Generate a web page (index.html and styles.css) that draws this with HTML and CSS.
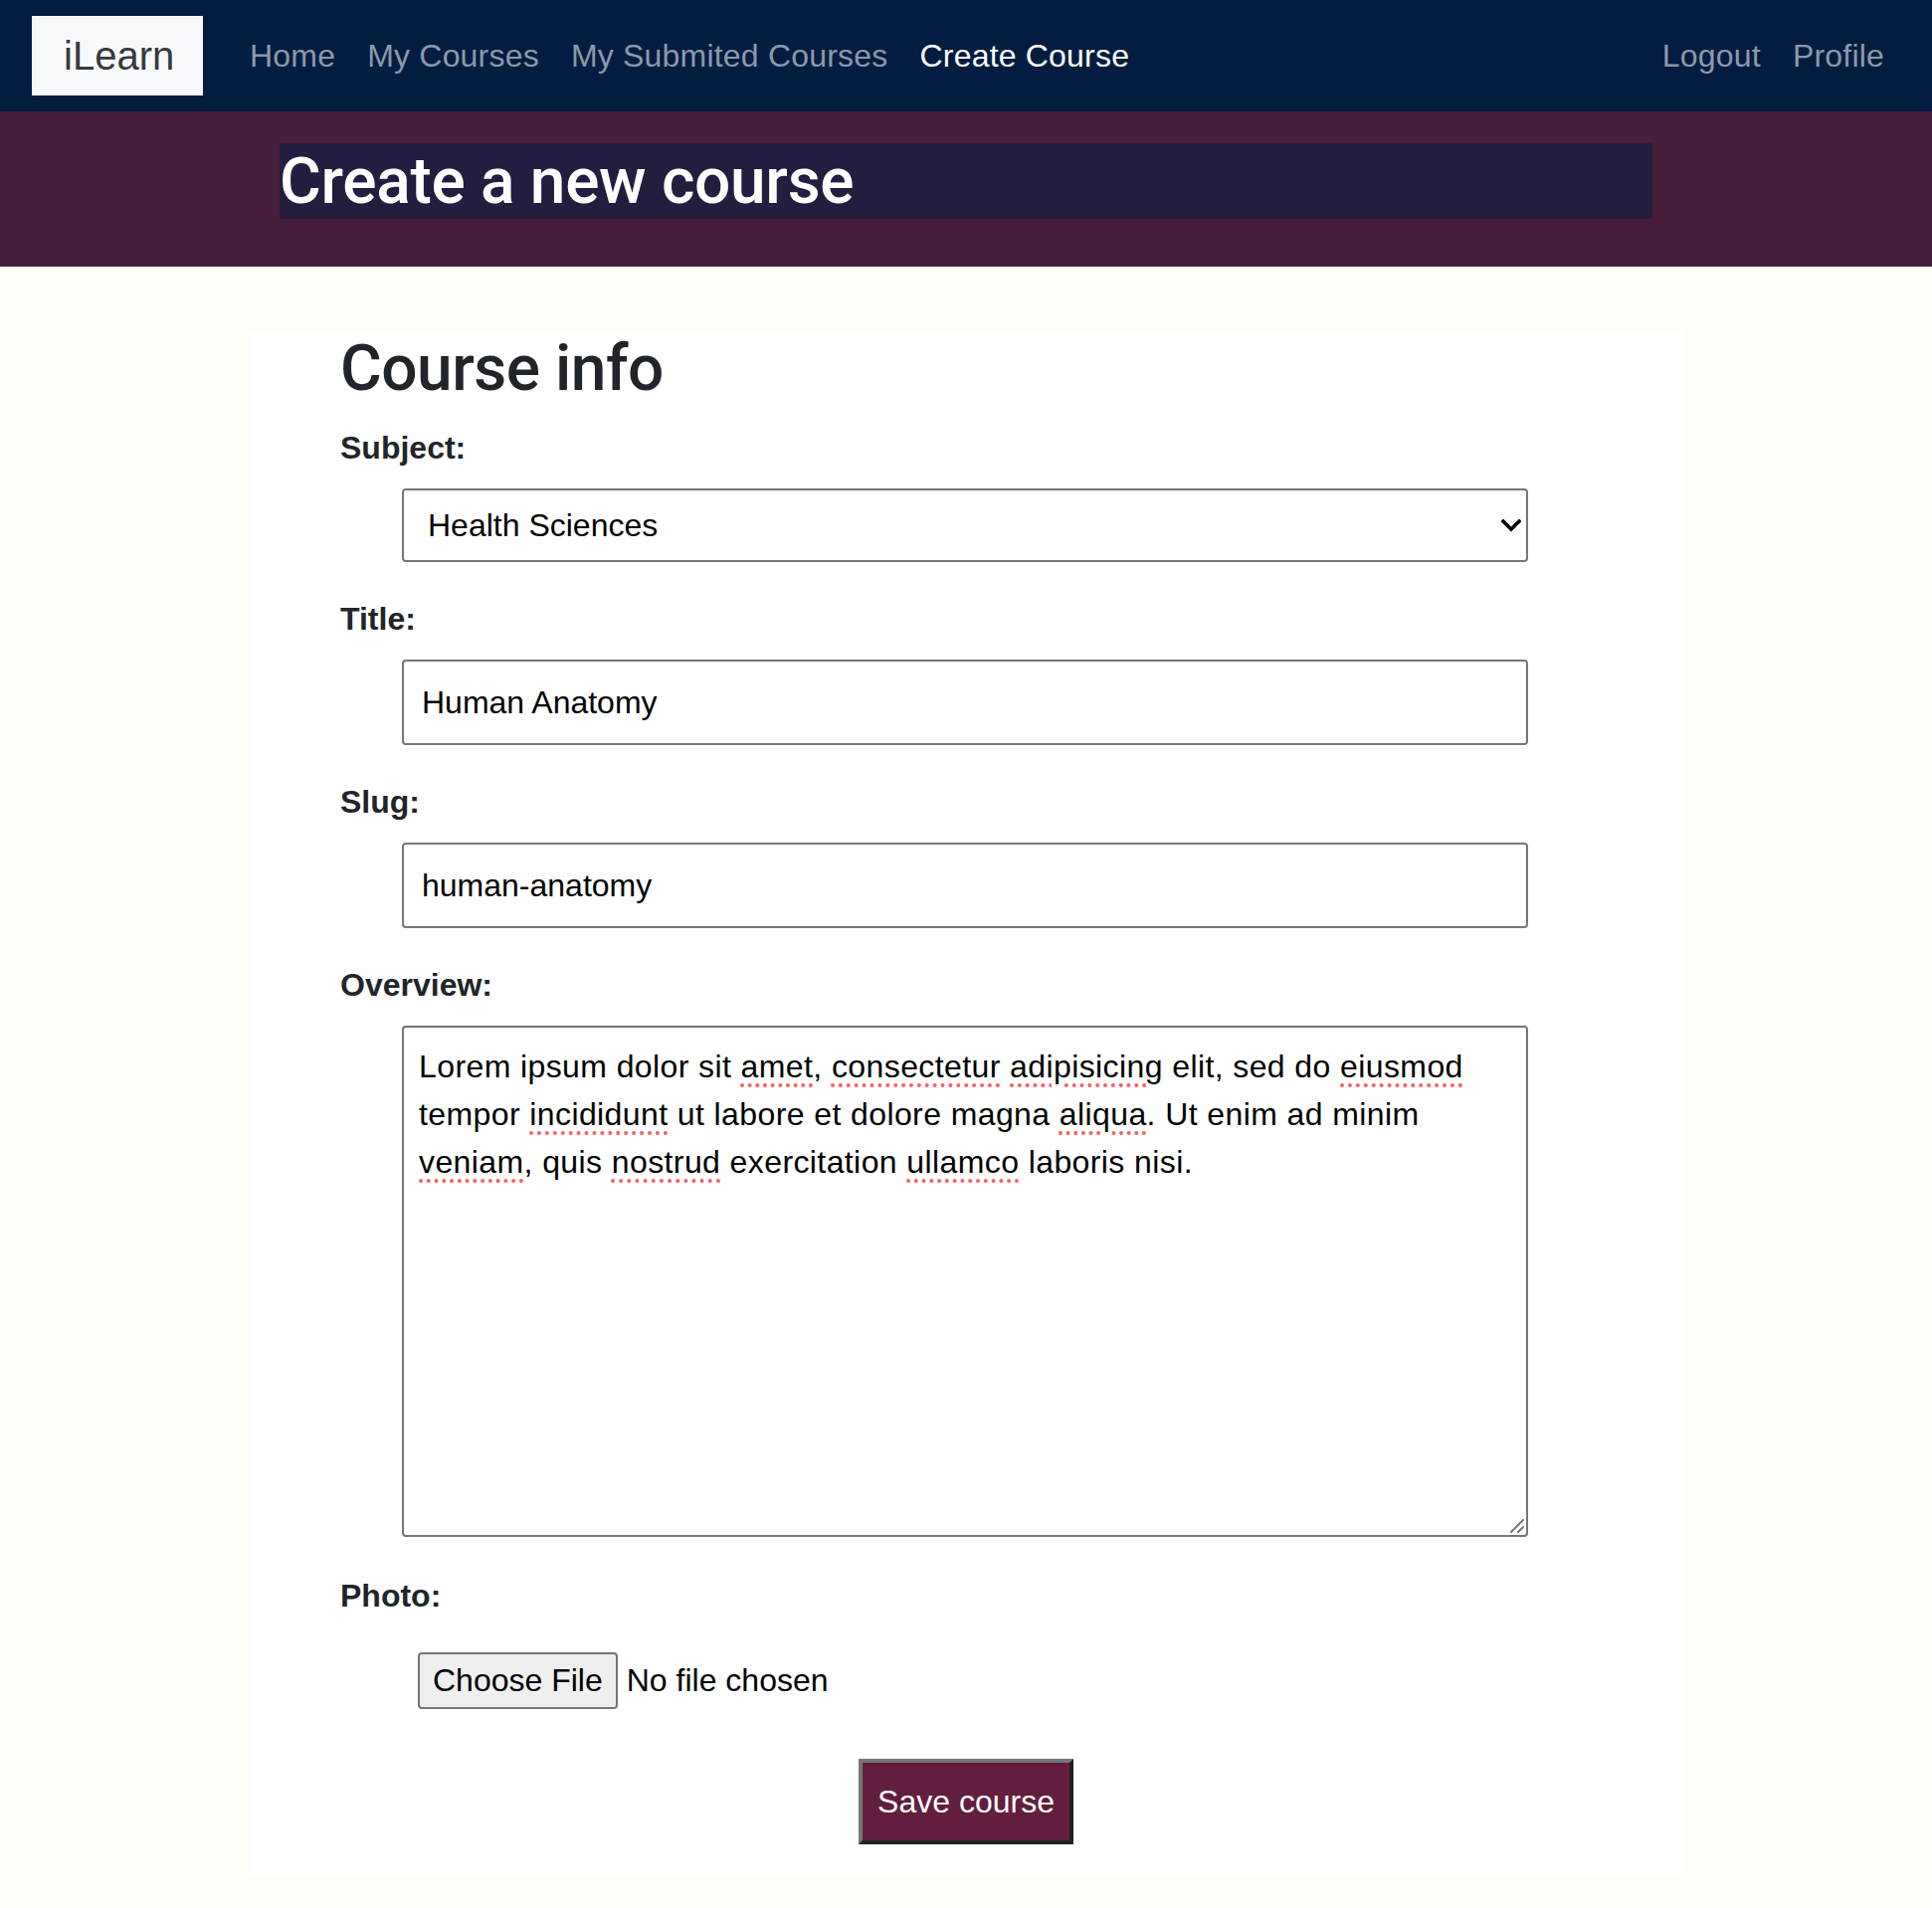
FILE: index.html
```html
<!DOCTYPE html>
<html lang="en">
<head>
<meta charset="utf-8">
<title>iLearn - Create a new course</title>
<link rel="stylesheet" href="styles.css">
</head>
<body>
<nav class="navbar">
  <a class="brand" href="#">iLearn</a>
  <ul class="nav-left">
    <li><a class="nav-link" href="#">Home</a></li>
    <li><a class="nav-link" href="#">My Courses</a></li>
    <li><a class="nav-link" href="#">My Submited Courses</a></li>
    <li><a class="nav-link active" href="#">Create Course</a></li>
  </ul>
  <ul class="nav-right">
    <li><a class="nav-link" href="#">Logout</a></li>
    <li><a class="nav-link" href="#">Profile</a></li>
  </ul>
</nav>

<header class="band">
  <h1 class="band-title">Create a new course</h1>
</header>

<main class="card">
  <h2 class="card-title">Course info</h2>
  <form class="form">
    <label class="field-label" for="subject">Subject:</label>
    <div class="control select-wrap">
      <select id="subject" class="select">
        <option>Health Sciences</option>
      </select>
      <svg class="chevron" width="20" height="14" viewBox="0 0 20 14"><path d="M2 3 L10 11 L18 3" fill="none" stroke="#000" stroke-width="3.6" stroke-linecap="square"/></svg>
    </div>

    <label class="field-label" for="title">Title:</label>
    <input id="title" class="control input" type="text" value="Human Anatomy">

    <label class="field-label" for="slug">Slug:</label>
    <input id="slug" class="control input" type="text" value="human-anatomy">

    <label class="field-label" for="overview">Overview:</label>
    <div class="control textarea-wrap">
      <div id="overview" class="textarea" contenteditable="true" spellcheck="false">Lorem ipsum dolor sit <span class="sp">amet</span>, <span class="sp">consectetur</span> <span class="sp">adipisicing</span> elit, sed do <span class="sp">eiusmod</span> tempor <span class="sp">incididunt</span> ut labore et dolore magna <span class="sp">aliqua</span>. Ut enim ad minim <span class="sp">veniam</span>, quis <span class="sp">nostrud</span> exercitation <span class="sp">ullamco</span> laboris nisi.</div>
      <svg class="grip" width="16" height="16" viewBox="0 0 16 16"><path d="M2 14 L14 2 M9 14 L14 9" stroke="#767676" stroke-width="2" stroke-linecap="round"/></svg>
    </div>

    <label class="field-label photo-label">Photo:</label>
    <div class="file-row">
      <label class="file-btn">Choose File<input class="file-input" type="file"></label>
      <span class="file-name">No file chosen</span>
    </div>

    <div class="actions">
      <button class="save-btn" type="button">Save course</button>
    </div>
  </form>
</main>
</body>
</html>
```

FILE: styles.css
```css
* { box-sizing: border-box; }

html, body {
  margin: 0;
  padding: 0;
}

body {
  background: #fffdf7;
  font-family: "Liberation Sans", Arial, sans-serif;
  color: #212529;
  min-height: 1918px;
}

/* NAVBAR */
.navbar {
  height: 112px;
  background: #021d3f;
  display: flex;
  align-items: center;
  padding: 0 32px;
}

.brand {
  display: flex;
  align-items: center;
  height: 80px;
  width: 172px;
  padding: 0 32px;
  background: #f8f9fa;
  color: #343a40;
  font-size: 40px;
  text-decoration: none;
  margin-right: 31px;
  white-space: nowrap;
}

.nav-left, .nav-right {
  list-style: none;
  margin: 0;
  padding: 0;
  display: flex;
}

.nav-right { margin-left: auto; }

.nav-link {
  display: block;
  padding: 8px 16px;
  font-size: 32px;
  letter-spacing: 0.2px;
  color: #8d98a8;
  text-decoration: none;
  white-space: nowrap;
}

.nav-link.active { color: #ffffff; }

/* BAND */
.band {
  background: #461e3c;
  padding: 32px 0 48px;
  display: flex;
  justify-content: center;
}

.band-title {
  margin: 0;
  width: 1380px;
  height: 76px;
  background: #251d3f;
  color: #ffffff;
  font-family: Roboto, "Liberation Sans", sans-serif;
  font-weight: 500;
  font-size: 64px;
  line-height: 78px;
  letter-spacing: -0.3px;
}

/* CARD */
.card {
  width: 1440px;
  margin: 64px auto 0;
  background: #ffffff;
  padding: 0 0 32px 91px;
}

.card-title {
  margin: 0 0 17px;
  font-family: Roboto, "Liberation Sans", sans-serif;
  font-weight: 500;
  font-size: 64px;
  line-height: 77px;
  color: #212529;
  letter-spacing: -0.5px;
}

.form {
  display: flex;
  flex-direction: column;
  align-items: flex-start;
}

.field-label {
  display: block;
  font-weight: 700;
  font-size: 32px;
  line-height: 48px;
  margin-bottom: 17px;
  color: #212529;
}

.control {
  margin-left: 62px;
  width: 1132px;
  margin-bottom: 33px;
}

.select-wrap { position: relative; height: 74px; }

.select {
  appearance: none;
  -webkit-appearance: none;
  width: 100%;
  height: 74px;
  border: 2px solid #767676;
  border-radius: 4px;
  background: #ffffff;
  color: #000000;
  font-family: "Liberation Sans", Arial, sans-serif;
  font-size: 32px;
  padding: 0 0 0 24px;
  margin: 0;
}

.chevron {
  position: absolute;
  right: 7px;
  top: 30px;
  pointer-events: none;
}

.input {
  height: 86px;
  border: 2px solid #767676;
  border-radius: 4px;
  background: #ffffff;
  color: #000000;
  font-family: "Liberation Sans", Arial, sans-serif;
  font-size: 32px;
  padding: 0 18px;
  outline: none;
}

.textarea-wrap {
  position: relative;
  height: 514px;
  margin-bottom: 35px;
}

.textarea {
  height: 100%;
  border: 2px solid #767676;
  border-radius: 4px;
  background: #ffffff;
  color: #000000;
  font-family: "Liberation Sans", Arial, sans-serif;
  font-size: 32px;
  letter-spacing: 0.4px;
  line-height: 48px;
  padding: 15px 18px 14px 15px;
  outline: none;
  overflow: hidden;
}

.sp {
  text-decoration: underline dotted #ff5c5c;
  text-decoration-thickness: 4px;
  text-underline-offset: 6px;
}

.grip {
  position: absolute;
  right: 3px;
  bottom: 3px;
}

.photo-label { margin-bottom: 33px; }

.file-row {
  margin-left: 78px;
  display: flex;
  align-items: center;
  height: 57px;
  margin-bottom: 50px;
}

.file-btn {
  display: flex;
  align-items: center;
  height: 57px;
  padding: 0 13px;
  background: #efefef;
  border: 2px solid #767676;
  border-radius: 4px;
  color: #000000;
  font-size: 32px;
}

.file-input { display: none; }

.file-name {
  margin-left: 9px;
  font-size: 32px;
  color: #000000;
}

.actions {
  width: 1258px;
  display: flex;
  justify-content: center;
}

.save-btn {
  height: 86px;
  padding: 0 15px;
  background: #621e3e;
  color: #ffffff;
  font-family: "Liberation Sans", Arial, sans-serif;
  font-size: 32px;
  border-style: solid;
  border-width: 4px;
  border-color: #767676 #222222 #222222 #767676;
  margin: 0;
}
```
